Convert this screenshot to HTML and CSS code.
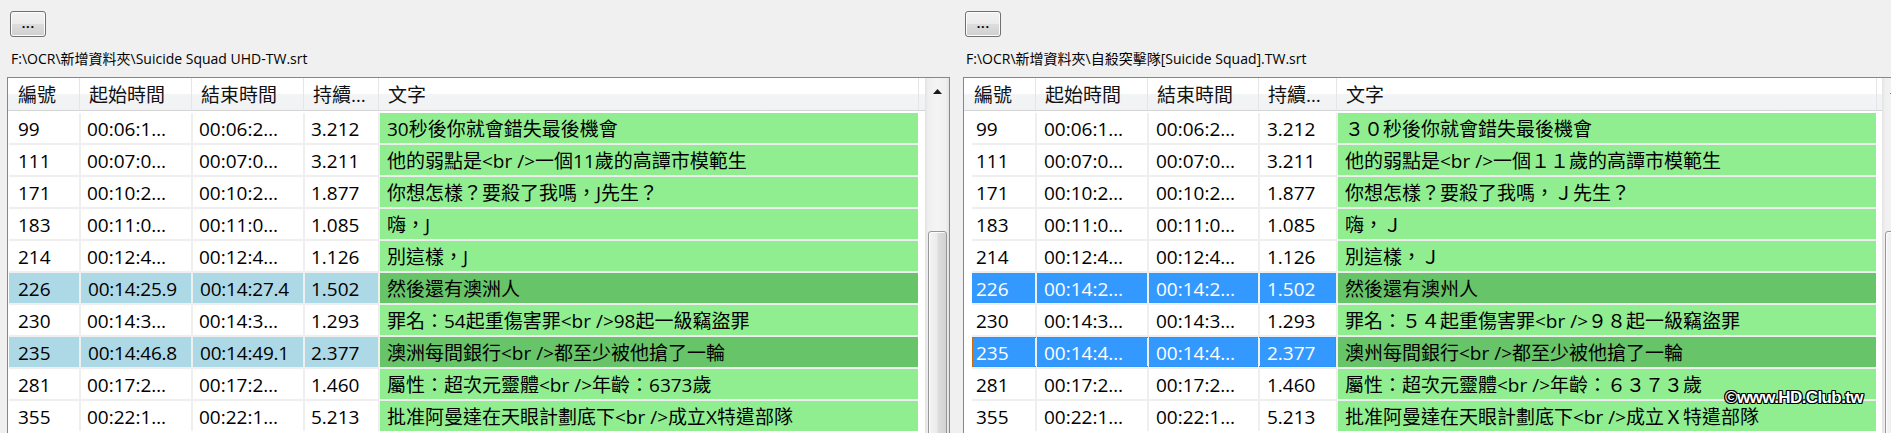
FILE: index.html
```html
<!DOCTYPE html>
<html lang="zh-Hant">
<head>
<meta charset="utf-8">
<title>字幕比對</title>
<link rel="stylesheet" href="styles.css">
</head>
<body>
<div class="page">
  <section class="panel panel-left">
    <button class="browse" type="button">...</button>
    <div class="path">F:\OCR\新增資料夾\Suicide Squad UHD-TW.srt</div>
    <div class="listbox">
      <div class="grid">
        <div class="header">
          <div class="hc">編號</div>
          <div class="hc">起始時間</div>
          <div class="hc">結束時間</div>
          <div class="hc">持續…</div>
          <div class="hc">文字</div>
          <div class="hc filler"></div>
        </div>
        <div class="rows">
          <div class="row">
            <div class="meta"><div class="cell c1">99</div><div class="cell c2">00:06:1…</div><div class="cell c3">00:06:2…</div><div class="cell c4">3.212</div></div>
            <div class="cell txt">30秒後你就會錯失最後機會</div>
          </div>
          <div class="row">
            <div class="meta"><div class="cell c1">111</div><div class="cell c2">00:07:0…</div><div class="cell c3">00:07:0…</div><div class="cell c4">3.211</div></div>
            <div class="cell txt">他的弱點是&lt;br /&gt;一個11歲的高譚市模範生</div>
          </div>
          <div class="row">
            <div class="meta"><div class="cell c1">171</div><div class="cell c2">00:10:2…</div><div class="cell c3">00:10:2…</div><div class="cell c4">1.877</div></div>
            <div class="cell txt">你想怎樣？要殺了我嗎，J先生？</div>
          </div>
          <div class="row">
            <div class="meta"><div class="cell c1">183</div><div class="cell c2">00:11:0…</div><div class="cell c3">00:11:0…</div><div class="cell c4">1.085</div></div>
            <div class="cell txt">嗨，J</div>
          </div>
          <div class="row">
            <div class="meta"><div class="cell c1">214</div><div class="cell c2">00:12:4…</div><div class="cell c3">00:12:4…</div><div class="cell c4">1.126</div></div>
            <div class="cell txt">別這樣，J</div>
          </div>
          <div class="row diff">
            <div class="meta"><div class="cell c1">226</div><div class="cell c2">00:14:25.9</div><div class="cell c3">00:14:27.4</div><div class="cell c4">1.502</div></div>
            <div class="cell txt">然後還有澳洲人</div>
          </div>
          <div class="row">
            <div class="meta"><div class="cell c1">230</div><div class="cell c2">00:14:3…</div><div class="cell c3">00:14:3…</div><div class="cell c4">1.293</div></div>
            <div class="cell txt">罪名：54起重傷害罪&lt;br /&gt;98起一級竊盜罪</div>
          </div>
          <div class="row diff">
            <div class="meta"><div class="cell c1">235</div><div class="cell c2">00:14:46.8</div><div class="cell c3">00:14:49.1</div><div class="cell c4">2.377</div></div>
            <div class="cell txt">澳洲每間銀行&lt;br /&gt;都至少被他搶了一輪</div>
          </div>
          <div class="row">
            <div class="meta"><div class="cell c1">281</div><div class="cell c2">00:17:2…</div><div class="cell c3">00:17:2…</div><div class="cell c4">1.460</div></div>
            <div class="cell txt">屬性：超次元靈體&lt;br /&gt;年齡：6373歲</div>
          </div>
          <div class="row">
            <div class="meta"><div class="cell c1">355</div><div class="cell c2">00:22:1…</div><div class="cell c3">00:22:1…</div><div class="cell c4">5.213</div></div>
            <div class="cell txt">批准阿曼達在天眼計劃底下&lt;br /&gt;成立X特遣部隊</div>
          </div>
        </div>
      </div>
      <div class="vscroll">
        <div class="sbtn"><svg width="9" height="5" viewBox="0 0 9 5"><polygon points="0,5 4.5,0 9,5" fill="#1a1a1a"/></svg></div>
        <div class="thumb"></div>
      </div>
    </div>
  </section>

  <section class="panel panel-right">
    <button class="browse" type="button">...</button>
    <div class="path">F:\OCR\新增資料夾\自殺突擊隊[Suicide Squad].TW.srt</div>
    <div class="listbox">
      <div class="grid">
        <div class="header">
          <div class="hc">編號</div>
          <div class="hc">起始時間</div>
          <div class="hc">結束時間</div>
          <div class="hc">持續…</div>
          <div class="hc">文字</div>
          <div class="hc filler"></div>
        </div>
        <div class="rows">
          <div class="row">
            <div class="meta"><div class="cell c1">99</div><div class="cell c2">00:06:1…</div><div class="cell c3">00:06:2…</div><div class="cell c4">3.212</div></div>
            <div class="cell txt">３０秒後你就會錯失最後機會</div>
          </div>
          <div class="row">
            <div class="meta"><div class="cell c1">111</div><div class="cell c2">00:07:0…</div><div class="cell c3">00:07:0…</div><div class="cell c4">3.211</div></div>
            <div class="cell txt">他的弱點是&lt;br /&gt;一個１１歲的高譚市模範生</div>
          </div>
          <div class="row">
            <div class="meta"><div class="cell c1">171</div><div class="cell c2">00:10:2…</div><div class="cell c3">00:10:2…</div><div class="cell c4">1.877</div></div>
            <div class="cell txt">你想怎樣？要殺了我嗎，Ｊ先生？</div>
          </div>
          <div class="row">
            <div class="meta"><div class="cell c1">183</div><div class="cell c2">00:11:0…</div><div class="cell c3">00:11:0…</div><div class="cell c4">1.085</div></div>
            <div class="cell txt">嗨，Ｊ</div>
          </div>
          <div class="row">
            <div class="meta"><div class="cell c1">214</div><div class="cell c2">00:12:4…</div><div class="cell c3">00:12:4…</div><div class="cell c4">1.126</div></div>
            <div class="cell txt">別這樣，Ｊ</div>
          </div>
          <div class="row sel">
            <div class="meta"><div class="cell c1">226</div><div class="cell c2">00:14:2…</div><div class="cell c3">00:14:2…</div><div class="cell c4">1.502</div></div>
            <div class="cell txt">然後還有澳州人</div>
          </div>
          <div class="row">
            <div class="meta"><div class="cell c1">230</div><div class="cell c2">00:14:3…</div><div class="cell c3">00:14:3…</div><div class="cell c4">1.293</div></div>
            <div class="cell txt">罪名：５４起重傷害罪&lt;br /&gt;９８起一級竊盜罪</div>
          </div>
          <div class="row sel focus">
            <div class="meta"><div class="cell c1">235</div><div class="cell c2">00:14:4…</div><div class="cell c3">00:14:4…</div><div class="cell c4">2.377</div></div>
            <div class="cell txt">澳州每間銀行&lt;br /&gt;都至少被他搶了一輪</div>
          </div>
          <div class="row">
            <div class="meta"><div class="cell c1">281</div><div class="cell c2">00:17:2…</div><div class="cell c3">00:17:2…</div><div class="cell c4">1.460</div></div>
            <div class="cell txt">屬性：超次元靈體&lt;br /&gt;年齡：６３７３歲</div>
          </div>
          <div class="row">
            <div class="meta"><div class="cell c1">355</div><div class="cell c2">00:22:1…</div><div class="cell c3">00:22:1…</div><div class="cell c4">5.213</div></div>
            <div class="cell txt">批准阿曼達在天眼計劃底下&lt;br /&gt;成立Ｘ特遣部隊</div>
          </div>
        </div>
      </div>
      <div class="vscroll">
        <div class="sbtn"><svg width="9" height="5" viewBox="0 0 9 5"><polygon points="0,5 4.5,0 9,5" fill="#1a1a1a"/></svg></div>
        <div class="thumb"></div>
      </div>
    </div>
    <div class="watermark">©www.HD.Club.tw</div>
  </section>
</div>
</body>
</html>
```

FILE: styles.css
```css
html, body {
  margin: 0;
  padding: 0;
  overflow: hidden;
  background: #f0f0f0;
}

body {
  width: 1891px;
  height: 433px;
  font-family: "Open Sans", "Noto Sans CJK TC", sans-serif;
  color: #000;
}

.page {
  display: flex;
  align-items: flex-start;
  width: 1891px;
  height: 433px;
  overflow: hidden;
}

.panel {
  flex: none;
  box-sizing: border-box;
  width: 943px;
  padding-top: 11px;
  display: flex;
  flex-direction: column;
  align-items: flex-start;
}

.panel-left {
  margin-left: 7px;
}

.panel-right {
  margin-left: 13px;
  width: 944px;
  position: relative;
}

.browse {
  box-sizing: border-box;
  width: 36px;
  height: 26px;
  margin: 0 0 0 3px;
  padding: 0 0 4px;
  border: 1px solid #707070;
  border-radius: 3px;
  background: linear-gradient(to bottom, #f2f2f2 0%, #ebebeb 50%, #dddddd 51%, #cfcfcf 100%);
  box-shadow: inset 0 0 0 1px #fcfcfc;
  font-family: "Open Sans", sans-serif;
  font-weight: 600;
  font-size: 15px;
  line-height: 15px;
  letter-spacing: 0.3px;
  color: #000;
}

.panel-right .browse {
  margin-left: 2px;
}

.path {
  margin: 13px 0 0 4px;
  font-size: 14px;
  line-height: 18px;
  height: 18px;
  white-space: nowrap;
  color: #000;
}

.panel-right .path {
  margin-left: 3px;
}

.listbox {
  box-sizing: border-box;
  margin-top: 9px;
  width: 100%;
  height: 400px;
  border: 1px solid #828790;
  background: #fff;
  display: flex;
}

.grid {
  flex: none;
  width: 917px;
}

.panel-right .grid {
  width: 918px;
}

.header {
  box-sizing: border-box;
  height: 33px;
  display: grid;
  grid-template-columns: 72px 112px 112px 75px 540px 1fr;
  border-bottom: 1px solid #d5d5d5;
  background: linear-gradient(to bottom, #ffffff 0%, #ffffff 50%, #f3f4f6 50%, #f1f2f4 100%);
}

.panel-right .header {
  grid-template-columns: 72px 112px 111px 78px 540px 1fr;
}

.hc {
  box-sizing: border-box;
  border-right: 1px solid #e3e5e8;
  padding: 2px 0 0 9px;
  font-size: 19px;
  line-height: 30px;
  white-space: nowrap;
  overflow: hidden;
  color: #111;
}

.hc:first-child {
  padding-left: 10px;
}

.hc.filler {
  border-right: 0;
}

.rows {
  margin: 2px 0 0 1px;
  width: 909px;
  display: flex;
  flex-direction: column;
  gap: 2px;
  background: #efefef;
}

.panel-right .rows {
  margin-left: 8px;
  width: 904px;
}

.row {
  display: flex;
  gap: 2px;
  height: 30px;
}

.meta {
  display: flex;
  gap: 2px;
}

.cell {
  box-sizing: border-box;
  height: 30px;
  padding: 2px 0 0 6px;
  font-size: 19px;
  line-height: 28px;
  white-space: nowrap;
  overflow: hidden;
  background: #fff;
}

.c1 { width: 70px; padding-left: 9px; }
.c2 { width: 110px; }
.c3 { width: 110px; }
.c4 { width: 73px; }
.txt { width: 538px; padding-left: 7px; background: #90ee90; }

.row.diff .c2,
.row.diff .c3 {
  padding-left: 7px;
  letter-spacing: -0.2px;
}

.panel-right .c1 { width: 63px; padding-left: 4px; }
.panel-right .c2 { padding-left: 7px; }
.panel-right .c3 { width: 109px; padding-left: 7px; }
.panel-right .c4 { width: 76px; padding-left: 7px; }

.row.diff .meta .cell {
  background: #add8e6;
}

.row.diff .txt,
.row.sel .txt {
  background: #68c468;
}

.row.sel .meta .cell {
  background: #3399ff;
  color: #fff;
}

.row.focus .meta {
  outline: 1px dotted #cc6600;
  outline-offset: -1px;
}

.vscroll {
  flex: none;
  width: 24px;
  display: flex;
  flex-direction: column;
  align-items: center;
  background: linear-gradient(to right, #e2e2e2 0%, #efefef 12%, #f4f4f4 50%, #efefef 88%, #e2e2e2 100%);
}

.sbtn {
  width: 100%;
  height: 34px;
  display: flex;
  align-items: flex-start;
  justify-content: center;
  padding-top: 11px;
  box-sizing: border-box;
}

.sbtn svg {
  display: block;
}

.thumb {
  box-sizing: border-box;
  margin-top: 120px;
  width: 19px;
  height: 260px;
  border: 1px solid #979797;
  border-radius: 3px;
  background: linear-gradient(to right, #f4f4f4 0%, #ececec 45%, #dcdcdc 55%, #d2d2d2 100%);
  box-shadow: inset 1px 1px 0 #fbfbfb;
}

.watermark {
  position: absolute;
  left: 762px;
  top: 388px;
  font-family: "Liberation Sans", sans-serif;
  font-weight: bold;
  font-size: 17px;
  line-height: 20px;
  letter-spacing: -0.6px;
  color: #fff;
  white-space: nowrap;
  text-shadow:
    1px 0 0 #000, -1px 0 0 #000, 0 1px 0 #000, 0 -1px 0 #000,
    1px 1px 0 #000, -1px -1px 0 #000, 1px -1px 0 #000, -1px 1px 0 #000;
}
```
